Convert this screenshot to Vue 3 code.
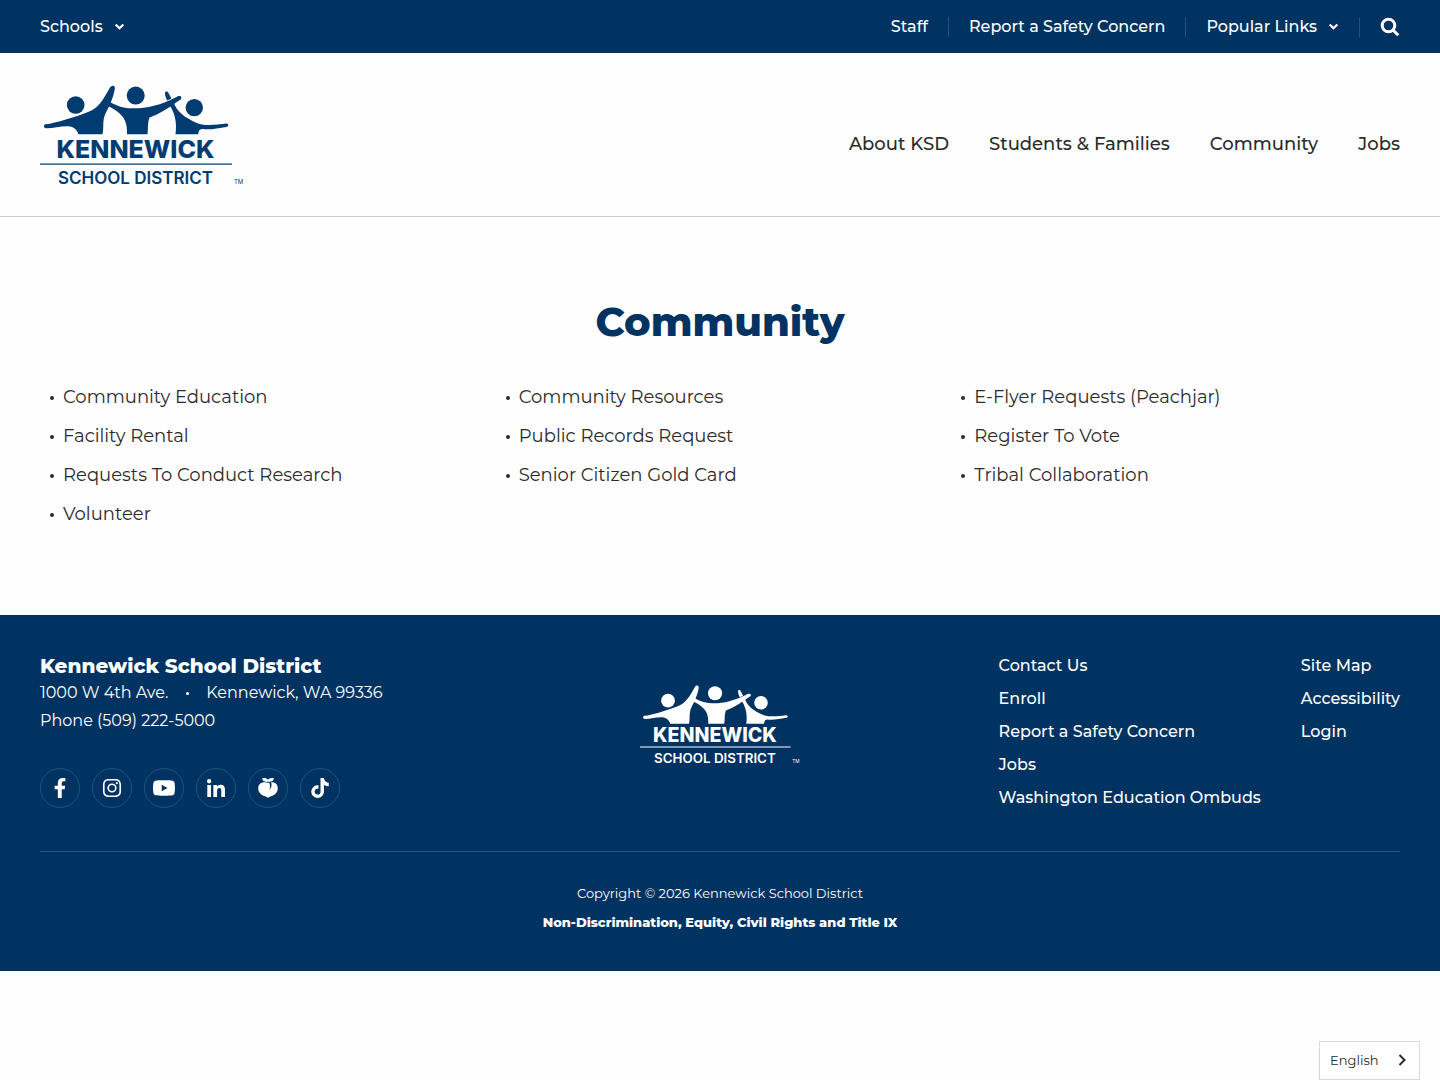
<template>
  <div class="page">
    <div class="topbar">
      <button type="button" class="top-item">
        Schools
        <svg class="caret" viewBox="0 0 10 10" aria-hidden="true"><path d="M1.5 3.2 5 6.6 8.5 3.2" /></svg>
      </button>
      <nav class="top-links" aria-label="Quick links">
        <a href="#" class="top-item">Staff</a>
        <a href="#" class="top-item">Report a Safety Concern</a>
        <button type="button" class="top-item">
          Popular Links
          <svg class="caret" viewBox="0 0 10 10" aria-hidden="true"><path d="M1.5 3.2 5 6.6 8.5 3.2" /></svg>
        </button>
        <button type="button" class="top-item" aria-label="Search">
          <svg class="search" viewBox="0 0 20 20" aria-hidden="true">
            <circle cx="8.5" cy="8.5" r="6.3" />
            <path d="M13 13 18.300 18.300" />
          </svg>
        </button>
      </nav>
    </div>

    <header class="header">
      <a href="#" class="brand" aria-label="Kennewick School District home">
        <DistrictLogo />
      </a>
      <nav class="main-nav" aria-label="Main">
        <a v-for="item in mainNav" :key="item" href="#">{{ item }}</a>
      </nav>
    </header>

    <main class="content">
      <h1>Community</h1>
      <ul class="link-grid">
        <li v-for="item in pages" :key="item"><a href="#">{{ item }}</a></li>
      </ul>
    </main>

    <footer class="footer">
      <div class="footer-main">
        <div class="contact">
          <h2>Kennewick School District</h2>
          <p class="address">
            <span>1000 W 4th Ave.</span>
            <span class="dot"></span>
            <span>Kennewick, WA 99336</span>
          </p>
          <p>Phone <a href="#">(509) 222-5000</a></p>
          <div class="social">
            <a v-for="s in socials" :key="s.name" href="#" :aria-label="s.name">
              <svg :viewBox="s.box" :class="s.size"><path :d="s.path" fill-rule="evenodd" /></svg>
            </a>
          </div>
        </div>

        <a href="#" class="footer-brand" aria-label="Kennewick School District home">
          <DistrictLogo />
        </a>

        <nav class="footer-links" aria-label="Footer">
          <ul v-for="(col, i) in footerLinks" :key="i">
            <li v-for="item in col" :key="item"><a href="#">{{ item }}</a></li>
          </ul>
        </nav>
      </div>

      <div class="legal">
        <p>Copyright © 2026 Kennewick School District</p>
        <a href="#">Non-Discrimination, Equity, Civil Rights and Title IX</a>
      </div>
    </footer>

    <button type="button" class="language">
      English
      <svg viewBox="0 0 8 12" aria-hidden="true"><path d="M1.5 1 6.5 6l-5 5" /></svg>
    </button>
  </div>
</template>

<script setup>
import { h } from 'vue'

const mainNav = ['About KSD', 'Students & Families', 'Community', 'Jobs']

const pages = [
  'Community Education',
  'Community Resources',
  'E-Flyer Requests (Peachjar)',
  'Facility Rental',
  'Public Records Request',
  'Register To Vote',
  'Requests To Conduct Research',
  'Senior Citizen Gold Card',
  'Tribal Collaboration',
  'Volunteer'
]

const footerLinks = [
  ['Contact Us', 'Enroll', 'Report a Safety Concern', 'Jobs', 'Washington Education Ombuds'],
  ['Site Map', 'Accessibility', 'Login']
]

const socials = [
  {
    name: 'Facebook',
    box: '0 0 320 512',
    size: 'icon',
    path: 'M279.14 288l14.22-92.66h-88.91v-60.13c0-25.35 12.42-50.06 52.24-50.06h40.42V6.26S260.43 0 225.36 0c-73.22 0-121.08 44.38-121.08 124.72v70.62H22.89V288h81.39v224h100.17V288z'
  },
  {
    name: 'Instagram',
    box: '0 0 448 448',
    size: 'icon icon-small',
    path: 'M224 109a115 115 0 1 0 0 230 115 115 0 0 0 0-230zm0 190a75 75 0 1 1 0-150 75 75 0 0 1 0 150zM343 77a27 27 0 1 0 0 54 27 27 0 0 0 0-54zM130 0C55 0 0 55 0 130v188c0 75 55 130 130 130h188c75 0 130-55 130-130V130C448 55 393 0 318 0zm0 40h188c53 0 90 37 90 90v188c0 53-37 90-90 90H130c-53 0-90-37-90-90V130c0-53 37-90 90-90z'
  },
  {
    name: 'YouTube',
    box: '14 64 548 384',
    size: 'icon icon-wide',
    path: 'M549.655 124.083c-6.281-23.65-24.787-42.276-48.284-48.597C458.781 64 288 64 288 64S117.22 64 74.629 75.486c-23.497 6.322-42.003 24.947-48.284 48.597-11.412 42.867-11.412 132.305-11.412 132.305s0 89.438 11.412 132.305c6.281 23.65 24.787 41.5 48.284 47.821C117.22 448 288 448 288 448s170.78 0 213.371-11.486c23.497-6.321 42.003-24.171 48.284-47.821 11.412-42.867 11.412-132.305 11.412-132.305s0-89.438-11.412-132.305zM232.145 337.591V175.185l142.739 81.205z'
  },
  {
    name: 'LinkedIn',
    box: '0 32 448 448',
    size: 'icon icon-small',
    path: 'M100.28 480H7.4V180.9h92.88zM53.79 140.1C24.09 140.1 0 115.5 0 85.8a53.79 53.79 0 0 1 107.58 0c0 29.7-24.1 54.3-53.79 54.3zM447.9 480h-92.68V334.4c0-34.7-.7-79.2-48.29-79.2-48.29 0-55.69 37.7-55.69 76.7V480h-92.78V180.9h89.08v40.8h1.3c12.4-23.5 42.69-48.3 87.88-48.3 94 0 111.28 61.9 111.28 142.3V480z'
  },
  {
    name: 'Peachjar',
    box: '0 0 20 20',
    size: 'icon',
    path: 'M4 .5C6.2-.4 8.300 0 10 1.700 11.700 0 13.800-.4 16 .5c-.8 2.200-2.300 3.300-4.600 3.200-.5 0-1-.1-1.400-.3-.4.2-.9.3-1.400.3C6.300 3.800 4.800 2.700 4 .5zM9.300 4.800C4.500 3.200.2 5.700.2 10.300c0 4.300 3.400 7.100 6.800 8 1.300.4 2.200.8 3 1.500.8-.7 1.700-1.100 3-1.500 3.400-.9 6.800-3.700 6.800-8 0-4-2.900-6.400-6.700-5.900 1 2.700.2 5.400-1.900 7.300 1.200-2.400 1.100-4.800-.1-7.200z'
  },
  {
    name: 'TikTok',
    box: '0 0 448 512',
    size: 'icon',
    path: 'M448 209.910a210.060 210.060 0 0 1-122.770-39.250v178.720A162.550 162.550 0 1 1 185 188.310v89.890a74.620 74.620 0 1 0 52.230 71.180V0h88a121.180 121.180 0 0 0 1.860 22.170 122.180 122.180 0 0 0 53.910 80.220 121.430 121.430 0 0 0 67 20.140z'
  }
]

// Three figures with joined arms, shared by header and footer
const DistrictLogo = () =>
  h('svg', { class: 'logo', viewBox: '0 0 204 100', fill: 'currentColor' }, [
    h('circle', { cx: 35.7, cy: 20, r: 8.8 }),
    h('circle', { cx: 95.7, cy: 10.6, r: 9 }),
    h('circle', { cx: 154.3, cy: 22.6, r: 8.7 }),
    h('path', { d: 'M5.5 39.3C16 38.2 35 32 48 27 58 24 63 15 70 2.6 72-.6 75.600.4 74.800 4 73 15 67 25 64.500 31 62.500 37 64 43 62.500 49.300H38.500C37 45 34 41.600 28 41.200 20 41 13 43.500 6 43.300 3.400 43 3.400 39.700 5.500 39.300Z' }),
    h('path', { d: 'M70.5 17.2C76 20.5 83 23.200 91 23.200H99C112 22.800 126 17.500 138 11.300 141 10.200 142.600 13 140.300 14.800 131 21 122 28 109.500 32.500 107.300 38 108.300 44 107.500 49.300H87C87.500 37 84.500 29 68 21Z' }),
    h('path', { d: 'M125 8.3C125 5.8 128 6 128.400 8L131.500 13.600 127.200 15.600C126 13 125 11 125 8.300ZM129 18.900 133.600 16.800C136 26 144 32.500 158 38.500 167 41.300 177 39.500 186.500 38.500 189 38.700 189 41.300 186.500 41.900 178 43.400 170 44.800 162.500 44 159 44.200 158.600 46.500 158.300 49.300H135.500C137 38 135.500 29 129 18.900Z' }),
    h('text', { class: 'logo-name', x: 95.5, y: 73, 'text-anchor': 'middle' }, 'KENNEWICK'),
    h('path', { d: 'M0 78.5H192V79.7H0Z' }),
    h('text', { class: 'logo-sub', x: 95.5, y: 99, 'text-anchor': 'middle' }, 'SCHOOL DISTRICT'),
    h('text', { class: 'logo-tm', x: 194, y: 99 }, 'TM')
  ])
</script>

<style>
body {
  margin: 0;
  background: #fefefe;
}
</style>

<style scoped>
.page {
  font-family: Montserrat, Inter, "Open Sans", sans-serif;
  color: #2b2b2b;
}

a {
  color: inherit;
  text-decoration: none;
}

button {
  font: inherit;
  color: inherit;
  background: none;
  border: none;
  padding: 0;
  cursor: pointer;
}

ul {
  list-style: none;
  margin: 0;
  padding: 0;
}

p {
  margin: 0;
}

.topbar {
  display: flex;
  justify-content: space-between;
  align-items: center;
  height: 53px;
  padding: 0 40px;
  background: #003362;
  color: white;
  font-size: 16px;
  font-weight: 500;
}

.top-item {
  display: flex;
  align-items: center;
  gap: 11px;
  height: 20px;
  line-height: 20px;
}

.top-links {
  display: flex;
}

.top-links .top-item + .top-item {
  margin-left: 20px;
  padding-left: 20px;
  border-left: 1px solid #24527c;
}

.caret {
  width: 11px;
  height: 11px;
  fill: none;
  stroke: currentColor;
  stroke-width: 2;
}

.search {
  width: 20px;
  height: 20px;
  fill: none;
  stroke: currentColor;
  stroke-width: 3;
}

.header {
  display: flex;
  justify-content: space-between;
  align-items: flex-end;
  padding: 32px 40px 31px;
  border-bottom: 1px solid #cccccc;
}

.brand {
  width: 204px;
  height: 100px;
  color: #003c71;
}

.brand :deep(.logo),
.footer-brand :deep(.logo) {
  display: block;
  width: 100%;
  overflow: visible;
}

.page :deep(.logo-name) {
  font: 800 25px Inter, sans-serif;
}

.page :deep(.logo-sub) {
  font: 600 17px Inter, sans-serif;
}

.page :deep(.logo-tm) {
  font: 400 6px Inter, sans-serif;
}

.main-nav {
  display: flex;
  gap: 40px;
  padding-bottom: 29px;
  font-size: 18px;
  font-weight: 500;
  line-height: 24px;
}

.content {
  padding: 80px 40px 81px;
}

h1 {
  margin: 0 0 31px;
  color: #003362;
  font-size: 40px;
  font-weight: 800;
  line-height: 50px;
  text-align: center;
}

.link-grid {
  display: grid;
  grid-template-columns: repeat(3, 1fr);
  column-gap: 7px;
  font-size: 18px;
  line-height: 39px;
}

.link-grid li {
  display: flex;
  align-items: center;
  gap: 9px;
  padding-left: 10px;
}

.link-grid li::before {
  content: "";
  width: 4px;
  height: 4px;
  border-radius: 50%;
  background: #2b2b2b;
}

.footer {
  padding: 36px 40px 34px;
  background: #003362;
  color: white;
}

.footer-main {
  display: grid;
  grid-template-columns: 1fr auto 1fr;
  padding-bottom: 37px;
  border-bottom: 1px solid #24527c;
}

.contact {
  font-size: 16px;
  line-height: 28px;
}

h2 {
  margin: 0;
  padding-top: 2px;
  font-size: 20px;
  font-weight: 800;
  line-height: 26px;
}

.address {
  display: flex;
  align-items: center;
}

.dot {
  width: 3px;
  height: 3px;
  margin: 0 17px 0 18px;
  border-radius: 50%;
  background: white;
}

.social {
  display: flex;
  gap: 12px;
  margin-top: 33px;
}

.social a {
  display: flex;
  align-items: center;
  justify-content: center;
  box-sizing: border-box;
  width: 40px;
  height: 40px;
  border: 1px solid #24527c;
  border-radius: 50%;
}

.icon {
  width: 20px;
  height: 20px;
  fill: white;
}

.icon-small {
  width: 18px;
  height: 18px;
}

.icon-wide {
  width: 22px;
  height: 16px;
}

.footer-brand {
  width: 160px;
  margin-top: 34px;
}

.footer-links {
  display: flex;
  justify-content: flex-end;
  gap: 40px;
  font-size: 16px;
  font-weight: 500;
  line-height: 33px;
}

.footer-links ul {
  margin-top: -2px;
}

.legal {
  padding-top: 27px;
  font-size: 13px;
  line-height: 29px;
  text-align: center;
}

.legal a {
  font-weight: 800;
}

.language {
  position: fixed;
  right: 20px;
  bottom: 0;
  display: flex;
  align-items: center;
  justify-content: space-between;
  width: 101px;
  height: 39px;
  padding: 0 13px 1px 10px;
  background: white;
  border: 1px solid #d9d9d9;
  font-size: 13px;
}

.language svg {
  width: 8px;
  height: 12px;
  fill: none;
  stroke: currentColor;
  stroke-width: 2;
}
</style>
